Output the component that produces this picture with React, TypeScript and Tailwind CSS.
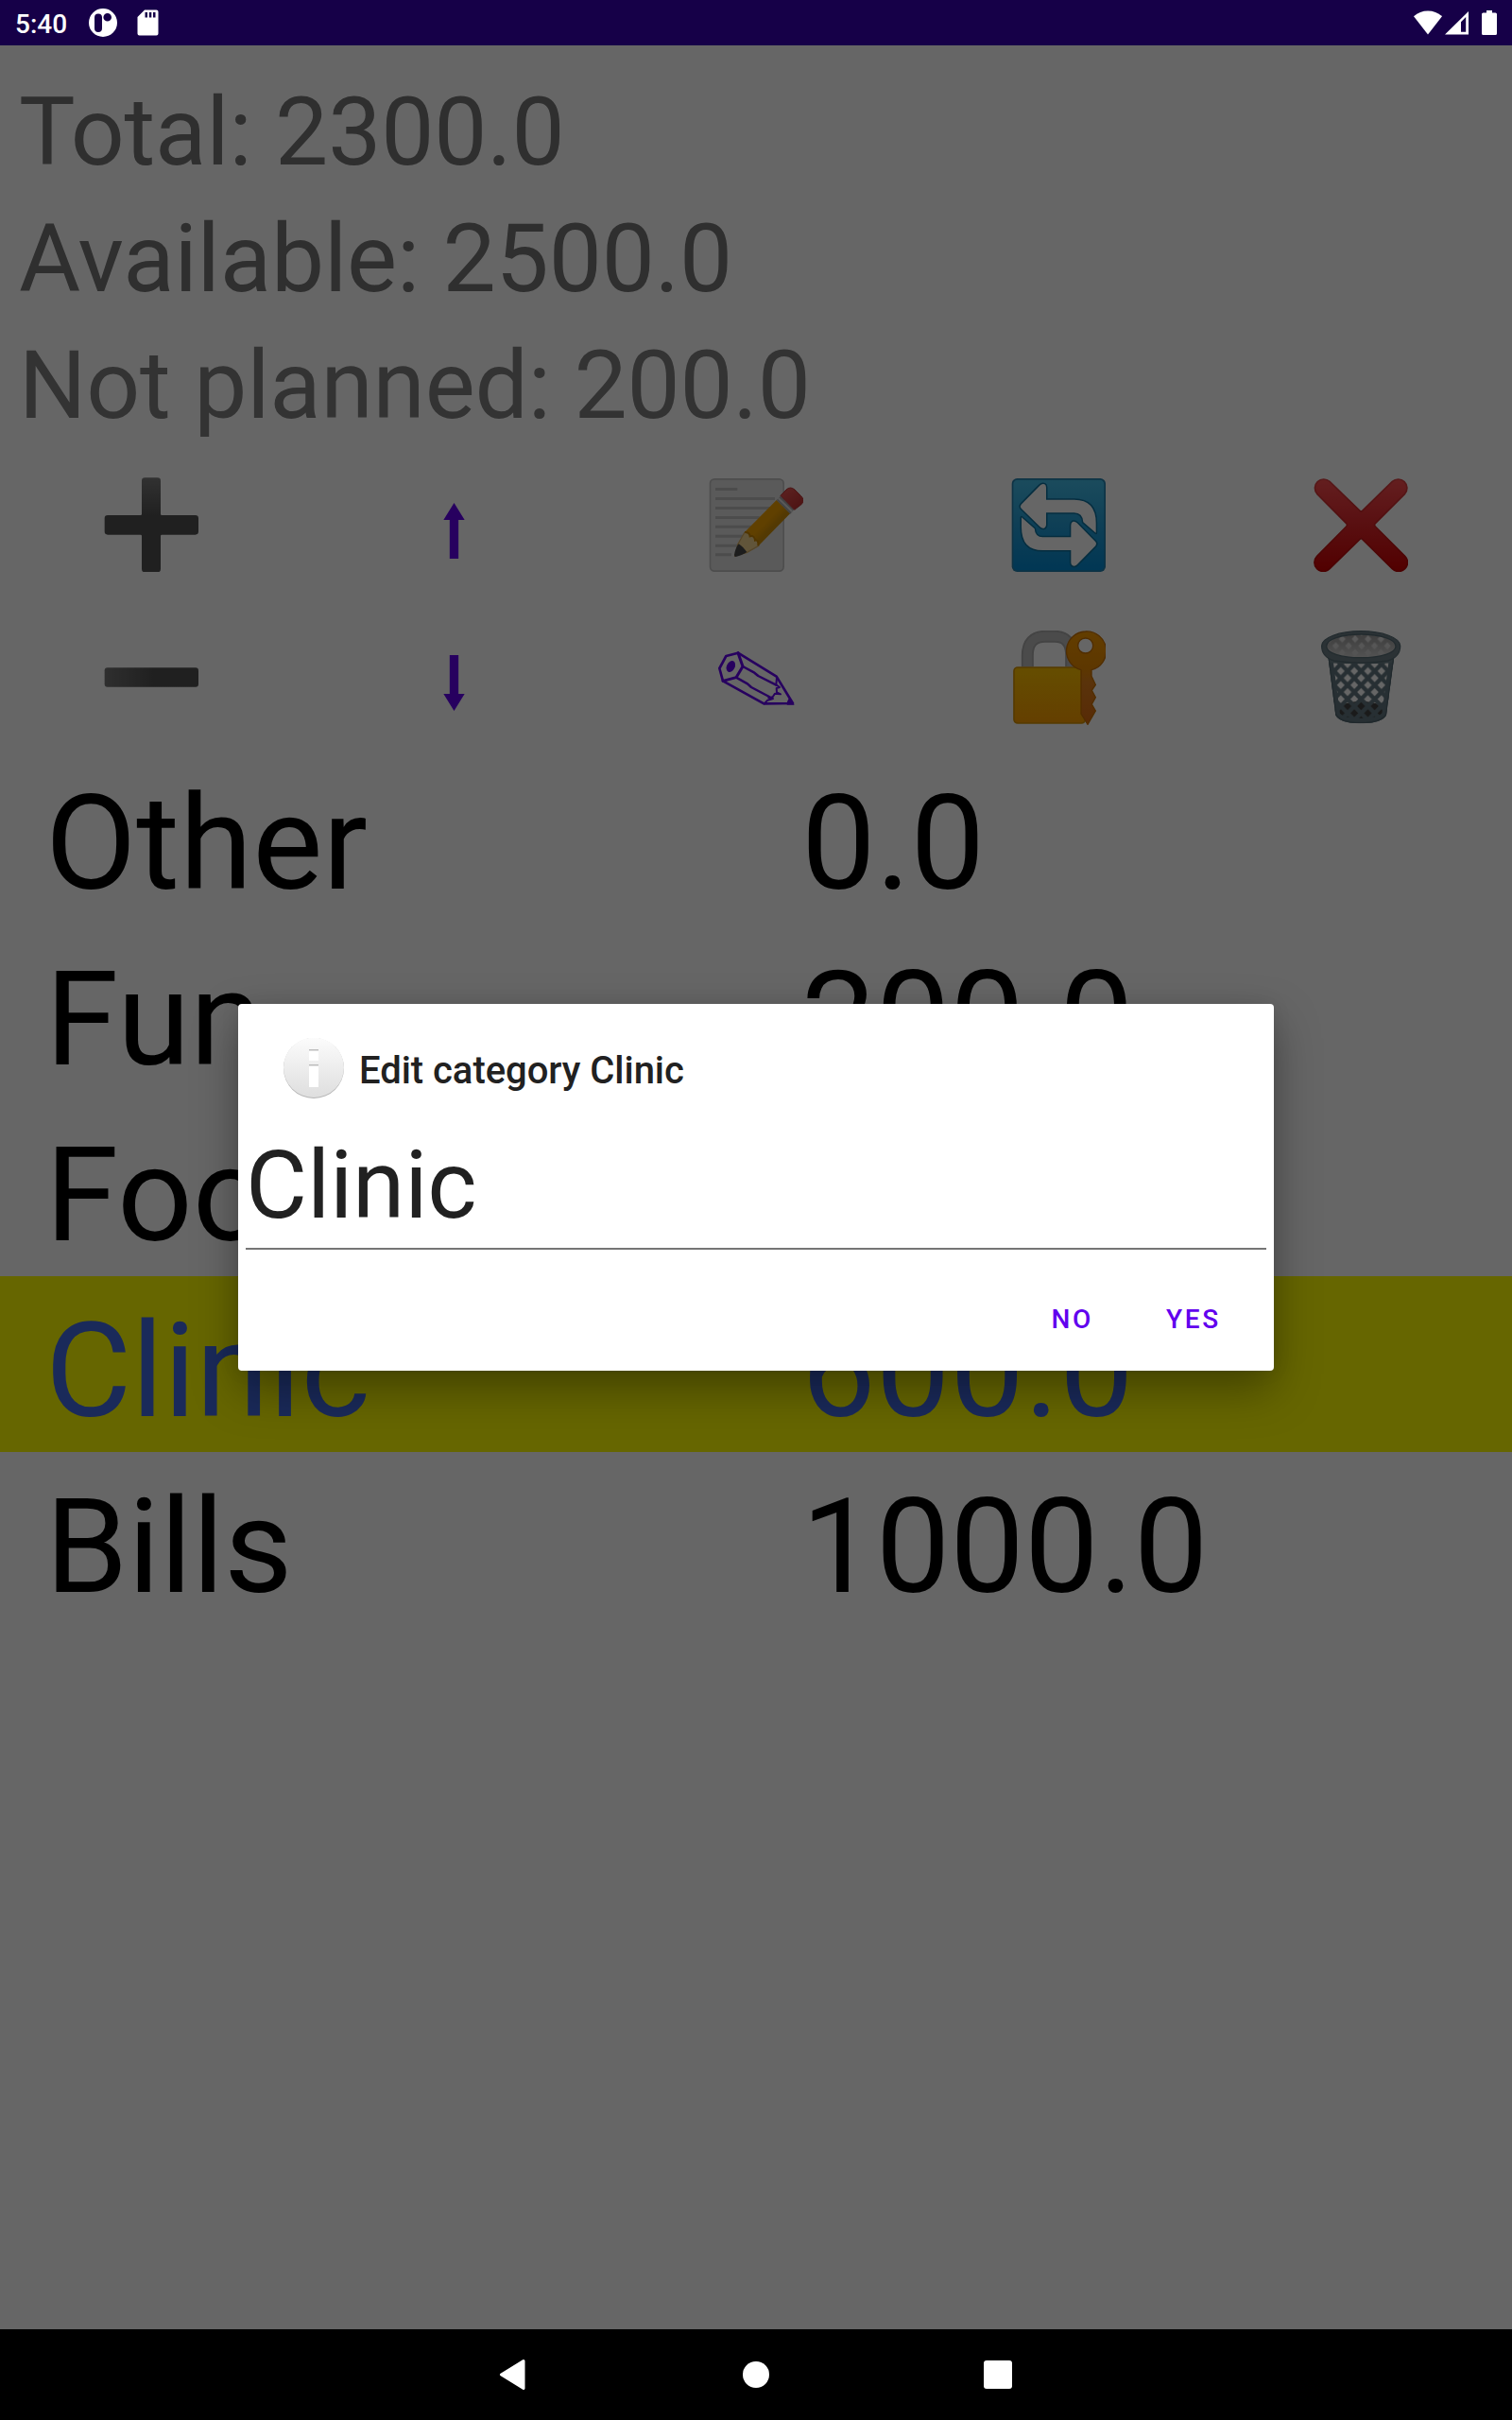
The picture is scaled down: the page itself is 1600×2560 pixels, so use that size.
import React from "react";

type IconProps = { box: string; label: string; children: React.ReactNode };

function ToolIcon({ box, label, children }: IconProps) {
  return (
    <button aria-label={label} className="flex items-start justify-center">
      <svg viewBox={box} className="block size-[100px]">
        {children}
      </svg>
    </button>
  );
}

function PlusIcon() {
  return (
    <ToolIcon box="60 45 300 300" label="Add">
      <defs>
        <linearGradient id="plus" x1="0" y1="45" x2="0" y2="165" gradientUnits="userSpaceOnUse">
          <stop offset="0" stopColor="#7c7c7c" />
          <stop offset="1" stopColor="#525252" />
        </linearGradient>
      </defs>
      <path
        d="M190 46h40a10 10 0 0 1 10 10v105q0 4 4 4h106a10 10 0 0 1 10 10v42a10 10 0 0 1-10 10H244q-4 0-4 4v105a10 10 0 0 1-10 10h-40a10 10 0 0 1-10-10V231q0-4-4-4H72a10 10 0 0 1-10-10v-42a10 10 0 0 1 10-10h104q4 0 4-4V56a10 10 0 0 1 10-10z"
        fill="url(#plus)"
      />
    </ToolIcon>
  );
}

function MinusIcon() {
  return (
    <ToolIcon box="60 531 300 300" label="Remove">
      <defs>
        <linearGradient id="minus" x1="62" y1="0" x2="215" y2="0" gradientUnits="userSpaceOnUse">
          <stop offset="0" stopColor="#757575" />
          <stop offset="1" stopColor="#525252" />
        </linearGradient>
      </defs>
      <rect x="62" y="649" width="298" height="61" rx="9" fill="url(#minus)" />
    </ToolIcon>
  );
}

function UpIcon() {
  return (
    <ToolIcon box="-30 -15 300 300" label="Move up">
      <path d="M121.500 66L155 120H135.500V243H107.500V120H88z" fill="#6200ee" />
    </ToolIcon>
  );
}

function DownIcon() {
  return (
    <ToolIcon box="-30 471 300 300" label="Move down">
      <path d="M121.500 726L155 672H135.500V549H107.500V672H88z" fill="#6200ee" />
    </ToolIcon>
  );
}

function MemoIcon() {
  return (
    <ToolIcon box="60 45 300 300" label="Edit note">
      <defs>
        <linearGradient id="wood" x1="190" y1="155" x2="250" y2="215" gradientUnits="userSpaceOnUse">
          <stop offset="0" stopColor="#ffc107" />
          <stop offset="0.35" stopColor="#f0a000" />
          <stop offset="0.7" stopColor="#f0a000" />
          <stop offset="1" stopColor="#d09008" />
        </linearGradient>
        <linearGradient id="eraser" x1="300" y1="85" x2="345" y2="145" gradientUnits="userSpaceOnUse">
          <stop offset="0" stopColor="#e55350" />
          <stop offset="1" stopColor="#c03030" />
        </linearGradient>
      </defs>
      <rect x="64.500" y="50.500" width="233" height="292" rx="14" fill="#e2e2e2" stroke="#c0c0c0" strokeWidth="5" />
      <path
        d="M81 82.500h70M81 112.500h189M81 142.500h180M81 172.500h140M81 201.500h120M81 231.500h90M81 261.500h80M81 290.500h51"
        stroke="#bdbdbd"
        strokeWidth="9"
        fill="none"
      />
      <path d="M275 117L319 159L217 263L180 285L141 296L152 256L174 219z" fill="url(#wood)" />
      <path d="M174 219C183 219 190 221 191 232C201 229 206 235 207 245C215 242 218 248 217 263L180 284L152 258z" fill="#f3d492" />
      <path d="M174 219C183 219 190 221 191 232C201 229 206 235 207 245C215 242 218 248 217 263" fill="none" stroke="#c88400" strokeWidth="6" />
      <path d="M217 263L180 284L152 258L174 219" fill="none" stroke="#d5b06b" strokeWidth="4" />
      <path d="M155 256C164 262 174 272 181 282C170 290 155 295 146 297Q140 297 141 291C143 278 147 266 155 256z" fill="#4a4a4a" />
      <path d="M275 117L288 104L331 147L319 161z" fill="#a8a8a8" />
      <path d="M281 111L325 154" stroke="#dedede" strokeWidth="6" />
      <path d="M288 103L306 84Q319 72 333 84L353 104Q366 117 355 130L332 148z" fill="url(#eraser)" stroke="#b83434" strokeWidth="3" />
    </ToolIcon>
  );
}

function PencilIcon() {
  return (
    <ToolIcon box="60 531 300 300" label="Rename">
      <g fill="none" stroke="#6200ee" strokeWidth="8" strokeLinejoin="round" strokeLinecap="round">
        <path d="M153 602L275 677L327 762L235 763L105 691L94 651L115 612z" />
        <path d="M153 602L168 645L147 680L105 691" strokeWidth="9" />
        <path d="M168 645L205 665L217 675L274 704" strokeWidth="7.500" />
        <path d="M147 680L183 700L195 711L252 741" strokeWidth="7.500" />
        <path d="M276 680L274 703L285 711L275 714L276 727L288 733L270 731L263 742L250 744L264 747L247 752L236 763" strokeWidth="6" />
      </g>
      <ellipse cx="130" cy="645" rx="13" ry="19" transform="rotate(25 130 645)" fill="#6200ee" />
      <path d="M318 744L332 767H308q-1-14 10-23z" fill="#6200ee" />
    </ToolIcon>
  );
}

function RefreshIcon() {
  return (
    <ToolIcon box="60 45 300 300" label="Refresh">
      <defs>
        <linearGradient id="refresh" x1="0" y1="48" x2="0" y2="345" gradientUnits="userSpaceOnUse">
          <stop offset="0" stopColor="#45bde8" />
          <stop offset="0.5" stopColor="#259ed6" />
          <stop offset="1" stopColor="#0288d1" />
        </linearGradient>
      </defs>
      <rect x="62" y="48" width="298" height="297" rx="17" fill="#2381ad" />
      <rect x="67" y="53" width="288" height="287" rx="13" fill="url(#refresh)" />
      <g fill="#ffffff" stroke="#0e719e" strokeWidth="9" strokeLinejoin="round" paintOrder="stroke">
        <path d="M92 131L151 71Q158 64 166 67Q171 70 171 77V116H260Q329 116 329 190V221L289 187Q287 157 260 157H171V195Q171 203 165 206Q157 208 151 201L92 143Q87 137 92 131z" />
        <path d="M328 262L269 322Q262 329 255 325Q250 322 250 316V276H160Q93 276 93 203V172L134 208Q136 235 160 235H250V197Q250 189 255 186Q262 183 269 190L328 250Q333 256 328 262z" />
      </g>
    </ToolIcon>
  );
}

function LockIcon() {
  return (
    <ToolIcon box="60 531 300 300" label="Lock">
      <defs>
        <linearGradient id="lock" x1="0" y1="645" x2="0" y2="828" gradientUnits="userSpaceOnUse">
          <stop offset="0" stopColor="#fcc200" />
          <stop offset="1" stopColor="#fb9d00" />
        </linearGradient>
        <linearGradient id="key" x1="0" y1="531" x2="0" y2="831" gradientUnits="userSpaceOnUse">
          <stop offset="0" stopColor="#f79a00" />
          <stop offset="0.4" stopColor="#e88a00" />
          <stop offset="0.55" stopColor="#e0801c" />
          <stop offset="1" stopColor="#dc6a10" />
        </linearGradient>
      </defs>
      <path d="M112 646V610Q112 550 168 550H198Q251 550 251 610V646" fill="none" stroke="#aaaaaa" strokeWidth="39" />
      <path d="M112 646V610Q112 550 168 550H198Q251 550 251 610V646" fill="none" stroke="#bcbcbc" strokeWidth="27" />
      <rect x="69" y="648" width="226" height="177" rx="12" fill="url(#lock)" stroke="#d59100" strokeWidth="5" />
      <path
        fillRule="evenodd"
        d="M296 534A62 62 0 0 1 315 656V676L328 703L316 721L328 743L316 765L328 786L303 829L282 795V656A62 62 0 0 1 296 534zM296 555A24 24 0 1 0 296 603A24 24 0 1 0 296 555z"
        fill="url(#key)"
        stroke="#c87000"
        strokeWidth="4"
      />
    </ToolIcon>
  );
}

function CrossIcon() {
  return (
    <ToolIcon box="60 45 300 300" label="Cancel">
      <defs>
        <linearGradient id="cross" x1="0" y1="48" x2="0" y2="345" gradientUnits="userSpaceOnUse">
          <stop offset="0" stopColor="#fa4e50" />
          <stop offset="0.45" stopColor="#e02a2e" />
          <stop offset="1" stopColor="#cc0000" />
        </linearGradient>
        <linearGradient id="crossEdge" x1="0" y1="48" x2="0" y2="345" gradientUnits="userSpaceOnUse">
          <stop offset="0" stopColor="#d84042" />
          <stop offset="1" stopColor="#b80000" />
        </linearGradient>
      </defs>
      <path
        d="M71 97A28 28 0 0 1 111 58L207 151Q211 155 215 151L310 58A28 28 0 0 1 350 97L256 191Q251 196 256 201L350 295A28 28 0 0 1 310 335L215 241Q211 237 207 241L111 335A28 28 0 0 1 71 295L164 201Q169 196 164 191z"
        fill="url(#cross)"
        stroke="url(#crossEdge)"
        strokeWidth="5"
      />
    </ToolIcon>
  );
}

function TrashIcon() {
  return (
    <ToolIcon box="60 531 300 300" label="Delete">
      <defs>
        <pattern id="mesh" x="189.500" y="637.500" width="43" height="44.500" patternUnits="userSpaceOnUse">
          <path d="M-5-5L48 49.500M48-5L-5 49.500" stroke="#62767f" strokeWidth="13" />
        </pattern>
        <pattern id="rimMesh" x="192" y="536" width="41" height="44" patternUnits="userSpaceOnUse">
          <path d="M0 0L41 44M41 0L0 44" stroke="#a0a0a0" strokeWidth="14" />
        </pattern>
        <linearGradient id="inside" x1="0" y1="550" x2="0" y2="616" gradientUnits="userSpaceOnUse">
          <stop offset="0" stopColor="#c4c4c4" stopOpacity="0" />
          <stop offset="1" stopColor="#d0d0d0" stopOpacity="1" />
        </linearGradient>
        <clipPath id="bin">
          <path d="M105 605L130 800Q145 826 210 826T291 800L317 605Q280 624 210 624T105 605z" />
        </clipPath>
      </defs>
      <g clipPath="url(#bin)">
        <path d="M140 770Q210 742 282 770V812H140z" fill="#424242" />
        <rect x="90" y="600" width="240" height="230" fill="url(#mesh)" />
        <path d="M102 600L128 800Q145 826 210 826T293 800L319 600" fill="none" stroke="#627780" strokeWidth="33" />
        <path d="M95 605Q210 656 325 605V633Q210 640 95 633z" fill="#6c8088" />
        <path d="M106 608L131 798Q146 824 210 824T290 798L316 608" fill="none" stroke="#50656e" strokeWidth="5" />
      </g>
      <ellipse cx="210.500" cy="581" rx="118" ry="42" fill="#e4e4e4" />
      <ellipse cx="210.500" cy="581" rx="115" ry="40" fill="url(#rimMesh)" />
      <ellipse cx="210.500" cy="581" rx="115" ry="40" fill="url(#inside)" />
      <path
        fillRule="evenodd"
        d="M210 533C279 533 335 554 335 580C335 606 316 621 296 627Q210 640 125 627C105 621 86 606 86 580C86 554 141 533 210 533zM210 543C146 543 101 560 101 581S146 617 210 617S321 602 321 581S274 543 210 543z"
        fill="#6c7e86"
        stroke="#566b74"
        strokeWidth="4"
      />
    </ToolIcon>
  );
}

function StatusBar() {
  return (
    <header className="relative z-10 flex h-12 shrink-0 items-center bg-[#160048] pl-4 text-white">
      <span className="w-[78px] pt-[3px] text-[28px] leading-8 font-medium">5:40</span>
      <svg viewBox="0 0 30 30" className="size-[30px]">
        <path
          fillRule="evenodd"
          d="M15 0A15 15 0 0 1 15 30A15 15 0 0 1 15 0zM10 5.500A4 4 0 0 0 6 9.500V21A4 4 0 0 0 14 21V9.500A4 4 0 0 0 10 5.500zM19.700 5A4.300 4.300 0 0 0 19.700 13.600A4.300 4.300 0 0 0 19.700 5z"
          fill="#fff"
        />
      </svg>
      <svg viewBox="0 0 23 28" className="ml-[21px] h-7 w-[23px]">
        <path fillRule="evenodd" d="M8 0.500H20.500a2 2 0 0 1 2 2V25.500a2 2 0 0 1-2 2H2.500a2 2 0 0 1-2-2V8zM8.500 3v5.500h2.500V3zM12.800 3v5.500h2.500V3zM17 3v5.500h2.500V3z" fill="#fff" />
      </svg>
      <div className="ml-auto flex items-center pr-4">
        <svg viewBox="0 0 30 26" className="h-[26px] w-[30px]">
          <path d="M15 25.500L0 6.200Q6.500 0.500 15 0.500T30 6.200z" fill="#fff" />
        </svg>
        <svg viewBox="0 0 25 26" className="ml-[3px] h-[26px] w-[25px]">
          <path fillRule="evenodd" d="M25 1V25.500H0zM22.200 7L17 12.200V22.800H22.200z" fill="#fff" />
        </svg>
        <svg viewBox="0 0 16 26" className="ml-[14px] h-[26px] w-4">
          <path d="M5 0H11V2.500H14.500Q16 2.500 16 4V24.500Q16 26 14.500 26H1.500Q0 26 0 24.500V4Q0 2.500 1.500 2.500H5z" fill="#fff" />
        </svg>
      </div>
    </header>
  );
}

const categories = [
  { name: "Other", amount: "0.0", selected: false },
  { name: "Fun", amount: "200.0", selected: false },
  { name: "Food", amount: "500.0", selected: false },
  { name: "Clinic", amount: "600.0", selected: true },
  { name: "Bills", amount: "1000.0", selected: false },
];

function Dialog() {
  return (
    <section
      role="dialog"
      className="absolute top-[1062px] left-[252px] flex h-[388px] w-[1096px] flex-col rounded-[4px] bg-white shadow-[0_20px_48px_rgba(0,0,0,0.34),0_0_20px_rgba(0,0,0,0.08)]"
    >
      <div className="flex items-center pt-9 pl-12">
        <svg viewBox="0 0 64 64" className="size-16">
          <defs>
            <linearGradient id="info" x1="0" y1="0" x2="0" y2="1">
              <stop offset="0" stopColor="#fcfcfc" />
              <stop offset="1" stopColor="#dedede" />
            </linearGradient>
          </defs>
          <circle cx="32" cy="32" r="32" fill="#b4b4b4" />
          <ellipse cx="32" cy="31.300" rx="32" ry="31.700" fill="url(#info)" />
          <path d="M27 12h10v3H27zM27 28h10v3H27z" fill="#bcbcbc" />
          <path d="M27 13.500h10V24H27zM27 29.500h10V52H27z" fill="#fff" />
        </svg>
        <h2 className="ml-4 pt-1 text-[40px] leading-[47px] font-medium tracking-[-0.040px] text-[#212121]">Edit category Clinic</h2>
      </div>
      <div className="mx-2 mt-[26px] h-[134px] border-b-2 border-[#757575] text-[100px] leading-[132px] tracking-[-0.200px] text-[#212121]">
        Clinic
      </div>
      <div className="mt-[50px] flex justify-end pr-[56px] text-[28px] leading-[48px] font-medium tracking-[2.700px] text-[#6200ee]">
        <button>NO</button>
        <button className="ml-[77px]">YES</button>
      </div>
    </section>
  );
}

export default function App() {
  return (
    <div className="relative flex h-[2560px] w-[1600px] flex-col overflow-hidden bg-white font-['Roboto',sans-serif]">
      <StatusBar />
      <main className="flex-1">
        <div className="px-5 pt-[25px] text-[100px] leading-[134px] tracking-[-0.170px] text-[#757575]">
          <p>Total: 2300.0</p>
          <p>Available: 2500.0</p>
          <p className="text-[#7f7f7f]">Not planned: 200.0</p>
        </div>
        <div className="grid h-[317px] grid-cols-5 grid-rows-[162px_155px] pt-[30px]">
          <PlusIcon />
          <UpIcon />
          <MemoIcon />
          <RefreshIcon />
          <CrossIcon />
          <MinusIcon />
          <DownIcon />
          <PencilIcon />
          <LockIcon />
          <TrashIcon />
        </div>
        <ul className="text-[140px] leading-[172px]">
          {categories.map((c) => (
            <li
              key={c.name}
              className={
                c.selected
                  ? "grid h-[186px] grid-cols-2 bg-[#ffff00] pt-[14px] text-[#4169e1]"
                  : "grid h-[186px] grid-cols-2 pt-[14px] text-black"
              }
            >
              <span className="pl-12">{c.name}</span>
              <span className="pl-12">{c.amount}</span>
            </li>
          ))}
        </ul>
      </main>
      <div className="absolute inset-0 bg-black/60" />
      <Dialog />
      <nav className="relative z-10 flex h-24 shrink-0 items-center bg-black pl-[528px]">
        <svg viewBox="0 0 28 32" className="h-8 w-7">
          <path d="M25.500 1.500L2 16L25.500 30.500z" transform="translate(0.500 0)" fill="#fff" stroke="#fff" strokeWidth="3" strokeLinejoin="round" />
        </svg>
        <div className="ml-[230px] size-7 rounded-full bg-white" />
        <div className="ml-[227px] size-[30px] rounded-[3px] bg-white" />
      </nav>
    </div>
  );
}
